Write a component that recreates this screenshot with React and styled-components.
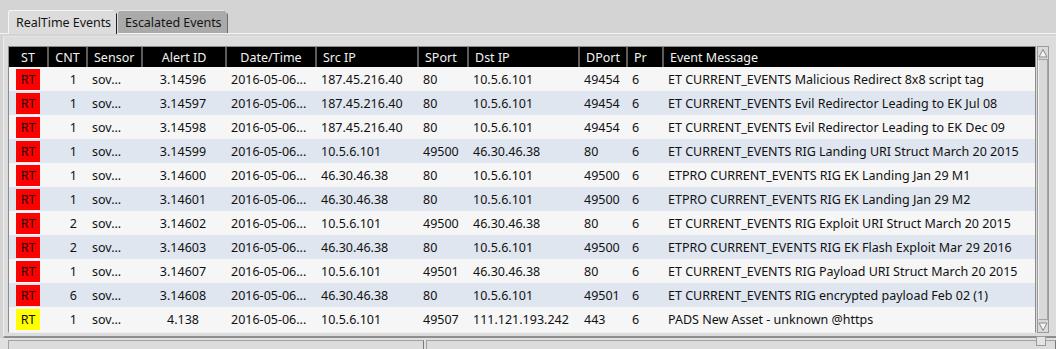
import React from "react";
import styled, { createGlobalStyle } from "styled-components";

const GlobalStyle = createGlobalStyle`
  html, body {
    margin: 0;
    padding: 0;
    background: #d4d4d4;
  }
  body {
    font-family: "Noto Sans", "Open Sans", sans-serif;
    font-size: 12px;
    color: #111;
  }
`;

const columns = [
  { key: "st", label: "ST", width: 38, head: "center", body: "center" },
  { key: "cnt", label: "CNT", width: 39, head: "center", body: "right" },
  { key: "sensor", label: "Sensor", width: 55, head: "left", body: "left" },
  { key: "id", label: "Alert ID", width: 84, head: "center", body: "center" },
  { key: "date", label: "Date/Time", width: 90, head: "center", body: "left" },
  { key: "src", label: "Src IP", width: 102, head: "left", body: "left" },
  { key: "sport", label: "SPort", width: 50, head: "left", body: "left" },
  { key: "dst", label: "Dst IP", width: 111, head: "left", body: "left" },
  { key: "dport", label: "DPort", width: 48, head: "left", body: "left" },
  { key: "pr", label: "Pr", width: 36, head: "left", body: "left" },
  { key: "msg", label: "Event Message", width: 0, head: "left", body: "left" },
];

const gridTemplate = columns
  .map((c) => (c.width ? `${c.width}px` : "1fr"))
  .join(" ");

const events = [
  ["red", "1", "3.14596", "187.45.216.40", "80", "10.5.6.101", "49454", "ET CURRENT_EVENTS Malicious Redirect 8x8 script tag"],
  ["red", "1", "3.14597", "187.45.216.40", "80", "10.5.6.101", "49454", "ET CURRENT_EVENTS Evil Redirector Leading to EK Jul 08"],
  ["red", "1", "3.14598", "187.45.216.40", "80", "10.5.6.101", "49454", "ET CURRENT_EVENTS Evil Redirector Leading to EK Dec 09"],
  ["red", "1", "3.14599", "10.5.6.101", "49500", "46.30.46.38", "80", "ET CURRENT_EVENTS RIG Landing URI Struct March 20 2015"],
  ["red", "1", "3.14600", "46.30.46.38", "80", "10.5.6.101", "49500", "ETPRO CURRENT_EVENTS RIG EK Landing Jan 29 M1"],
  ["red", "1", "3.14601", "46.30.46.38", "80", "10.5.6.101", "49500", "ETPRO CURRENT_EVENTS RIG EK Landing Jan 29 M2"],
  ["red", "2", "3.14602", "10.5.6.101", "49500", "46.30.46.38", "80", "ET CURRENT_EVENTS RIG Exploit URI Struct March 20 2015"],
  ["red", "2", "3.14603", "46.30.46.38", "80", "10.5.6.101", "49500", "ETPRO CURRENT_EVENTS RIG EK Flash Exploit Mar 29 2016"],
  ["red", "1", "3.14607", "10.5.6.101", "49501", "46.30.46.38", "80", "ET CURRENT_EVENTS RIG Payload URI Struct March 20 2015"],
  ["red", "6", "3.14608", "46.30.46.38", "80", "10.5.6.101", "49501", "ET CURRENT_EVENTS RIG encrypted payload Feb 02 (1)"],
  ["yellow", "1", "4.138", "10.5.6.101", "49507", "111.121.193.242", "443", "PADS New Asset - unknown @https"],
];

function App() {
  return (
    <>
      <GlobalStyle />
      <Window>
        <TabBar>
          <Tab $active>RealTime Events</Tab>
          <Tab>Escalated Events</Tab>
        </TabBar>
        <Pane>
          <Frame>
            <TableBox>
              <HeaderRow>
                {columns.map((c, i) => (
                  <HeadCell key={c.key} $align={c.head} $first={i === 0}>
                    {c.label}
                  </HeadCell>
                ))}
              </HeaderRow>
              <Body>
                {events.map((e, i) => (
                  <Row key={e[2]} $alt={i % 2 === 1}>
                    <Cell $align="center">
                      <Badge $color={e[0]}>RT</Badge>
                    </Cell>
                    <Cell $align="right">{e[1]}</Cell>
                    <Cell>sov...</Cell>
                    <Cell $align="center">{e[2]}</Cell>
                    <Cell>2016-05-06...</Cell>
                    <Cell>{e[3]}</Cell>
                    <Cell>{e[4]}</Cell>
                    <Cell>{e[5]}</Cell>
                    <Cell>{e[6]}</Cell>
                    <Cell>6</Cell>
                    <Cell>{e[7]}</Cell>
                  </Row>
                ))}
              </Body>
            </TableBox>
            <ScrollBar>
              <ArrowButton>
                <svg width="10" height="10" viewBox="0 0 10 10">
                  <polygon points="1,9 5,1.5 9,9" fill="#f4f4f4" stroke="#8a8a8a" strokeWidth="1" />
                </svg>
              </ArrowButton>
              <Trough />
              <ArrowButton>
                <svg width="10" height="10" viewBox="0 0 10 10">
                  <polygon points="1,1 5,8.5 9,1" fill="#f4f4f4" stroke="#8a8a8a" strokeWidth="1" />
                </svg>
              </ArrowButton>
            </ScrollBar>
          </Frame>
        </Pane>
        <BottomBar>
          <BottomBox $width={414} />
          <BottomBox />
          <Grip />
        </BottomBar>
      </Window>
    </>
  );
}

const Window = styled.div`
  width: 1056px;
  height: 349px;
  display: flex;
  flex-direction: column;
  overflow: hidden;
  background: #d4d4d4;
`;

const TabBar = styled.div`
  height: 34px;
  box-sizing: border-box;
  display: flex;
  align-items: flex-end;
  padding-left: 8px;
  border-bottom: 1px solid #f3f3f3;
  position: relative;
  z-index: 1;
`;

const Tab = styled.div`
  height: ${({ $active }) => ($active ? "24px" : "23px")};
  box-sizing: border-box;
  padding: 0 5px 0 7px;
  display: flex;
  align-items: center;
  font-size: 12.5px;
  letter-spacing: -0.05px;
  color: #141414;
  background: ${({ $active }) => ($active ? "#dcdcdc" : "#aaaaaa")};
  border-left: 1px solid ${({ $active }) => ($active ? "#f4f4f4" : "#e0e0e0")};
  border-top: 1px solid ${({ $active }) => ($active ? "#f4f4f4" : "#e6e6e6")};
  border-right: 1px solid #1e1e1e;
  margin-bottom: ${({ $active }) => ($active ? "-1px" : "0")};
  clip-path: polygon(0 0, calc(100% - 4px) 0, 100% 4px, 100% 100%, 0 100%);
  border-top-left-radius: 3px;
`;

const Pane = styled.div`
  margin: 2px 0 0 3px;
  padding: 9px 7px 3px 4px;
  background: #dcdcdc;
  border-top: 1px solid #e4e4e4;
  border-left: 1px solid #eeeeee;
  border-bottom: 2px solid #8e8e8e;
`;

const Frame = styled.div`
  display: flex;
  gap: 1px;
  height: 287px;
`;

const TableBox = styled.div`
  width: 1028px;
  box-sizing: border-box;
  border: 1px solid #8c8c8c;
  border-bottom-color: #f0f0f0;
  background: #f6f6f6;
  display: flex;
  flex-direction: column;
`;

const HeaderRow = styled.div`
  display: grid;
  grid-template-columns: ${gridTemplate};
  height: 20px;
  background: #000;
`;

const HeadCell = styled.div`
  display: flex;
  align-items: center;
  justify-content: ${({ $align }) =>
    $align === "center" ? "center" : "flex-start"};
  padding: 0 6px;
  color: #f2f2f2;
  font-size: 12.5px;
  white-space: nowrap;
  overflow: hidden;
  border-left: ${({ $first }) => ($first ? "none" : "2px solid #5c5c5c")};
`;

const Body = styled.div`
  flex: 1;
`;

const Row = styled.div`
  display: grid;
  grid-template-columns: ${gridTemplate};
  height: 24px;
  background: ${({ $alt }) => ($alt ? "#dfe6ef" : "#f6f6f6")};
`;

const Cell = styled.div`
  display: flex;
  align-items: center;
  justify-content: ${({ $align }) =>
    $align === "center" ? "center" : $align === "right" ? "flex-end" : "flex-start"};
  padding: 0 ${({ $align }) => ($align === "right" ? "9px" : "6px")};
  font-size: 12.5px;
  color: #111;
  white-space: nowrap;
  overflow: hidden;
`;

const Badge = styled.span`
  width: 24px;
  height: 21px;
  display: flex;
  align-items: center;
  justify-content: center;
  background: ${({ $color }) => ($color === "yellow" ? "#ffff00" : "#ff0000")};
  color: #111;
  font-size: 12.5px;
`;

const ScrollBar = styled.div`
  width: 12px;
  display: flex;
  flex-direction: column;
  border: 1px solid #9a9a9a;
  box-sizing: border-box;
  background: #d6d6d6;
`;

const ArrowButton = styled.div`
  height: 11px;
  display: flex;
  align-items: center;
  justify-content: center;
  background: #dadada;
  svg {
    display: block;
  }
`;

const Trough = styled.div`
  flex: 1;
  margin: 1px 0;
  border-left: 1px solid #f2f2f2;
  border-right: 1px solid #a4a4a4;
  border-top: 1px solid #a4a4a4;
  border-bottom: 1px solid #a4a4a4;
  background: #d8d8d8;
`;

const BottomBar = styled.div`
  flex: 1;
  display: flex;
  gap: 2px;
  padding: 2px 0 0 8px;
  background: #e0e0e0;
  position: relative;
`;

const BottomBox = styled.div`
  ${({ $width }) => ($width ? `width: ${$width}px;` : "flex: 1;")}
  border-top: 1px solid #a2a2a2;
  border-left: 1px solid #a2a2a2;
  border-right: 1px solid #7a7a7a;
  background: #dcdcdc;
`;

const Grip = styled.div`
  position: absolute;
  right: 10px;
  top: -2px;
  width: 8px;
  height: 8px;
  border: 1px solid #9a9a9a;
  background: #e4e4e4;
`;

export default App;
